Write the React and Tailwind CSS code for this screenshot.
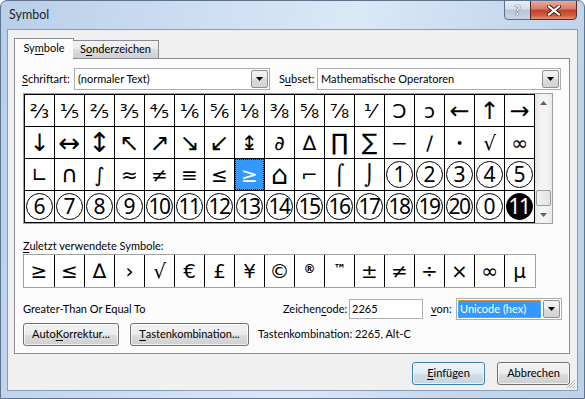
import React from 'react';

// Word "Symbol" dialog, Windows 7 look
const rows = [
  ['⅔', '⅕', '⅖', '⅗', '⅘', '⅙', '⅚', '⅛', '⅜', '⅝', '⅞', '⅟', 'Ↄ', 'ↄ', '←', '↑', '→'],
  ['↓', '↔', '↕', '↖', '↗', '↘', '↙', '↨', '∂', '∆', '∏', '∑', '−', '∕', '∙', '√', '∞'],
  ['∟', '∩', '∫', '≈', '≠', '≡', '≤', '≥', '⌂', '⌐', '⌠', '⌡', { n: '1' }, { n: '2' }, { n: '3' }, { n: '4' }, { n: '5' }],
  [
    { n: '6' }, { n: '7' }, { n: '8' }, { n: '9' }, { n: '10' }, { n: '11' }, { n: '12' }, { n: '13' }, { n: '14' },
    { n: '15' }, { n: '16' }, { n: '17' }, { n: '18' }, { n: '19' }, { n: '20' }, { n: '0' }, { n: '11', dark: true },
  ],
];

const recent = ['≥', '≤', '∆', '›', '√', '€', '£', '¥', '©', '®', '™', '±', '≠', '÷', '×', '∞', 'µ'];

const arrows = '←↑→↓↖↗↘↙';

function glyphSize(g) {
  if (arrows.includes(g)) return 'text-[24px]';
  if (g === '↔') return 'text-[26px]';
  if (g === '↕') return 'text-[27px]';
  if (g === '⌂') return 'text-[27px]';
  if (g === '∙') return 'text-[13px]';
  if (g === '∏' || g === '∑' || g === '∩') return 'text-[23px]';
  return 'text-[20px]';
}

function U({ children }) {
  return <span className="underline underline-offset-[2px]">{children}</span>;
}

function Circled({ n, dark }) {
  return (
    <div
      className={`w-[27px] h-[27px] rounded-full border border-black flex items-center justify-center font-['Noto_Sans',sans-serif] text-[21px] leading-none ${n.length > 1 ? 'tracking-[-1.5px] pr-[1px]' : ''} ${dark ? 'bg-black text-white' : 'bg-white text-black'}`}
    >
      {n}
    </div>
  );
}

function Cell({ g, selected }) {
  const str = typeof g === 'string';
  return (
    <div
      className={`w-[29px] h-[31px] flex items-center justify-center font-['DejaVu_Sans',sans-serif] leading-none ${str ? glyphSize(g) : ''} ${selected ? 'bg-[#3399ff] text-white outline outline-1 outline-dotted outline-[#202020] -outline-offset-1' : 'bg-white text-black'}`}
    >
      {str ? g : <Circled n={g.n} dark={g.dark} />}
    </div>
  );
}

function Arrow() {
  return (
    <svg width="7" height="4" viewBox="0 0 7 4">
      <path d="M0 0h7L3.5 4z" fill="#000" />
    </svg>
  );
}

function Combo({ w, children }) {
  return (
    <div className={`${w} h-[22px] flex border border-[#abadb3] bg-white`}>
      <div className="flex-1 flex items-center pl-[3px] overflow-hidden whitespace-nowrap">{children}</div>
      <div className="w-[17px] m-px flex items-center justify-center border border-[#8f8f8f] rounded-[2px] bg-[linear-gradient(#f4f4f4,#e9e9e9_50%,#dcdcdc_50%,#d2d2d2)]">
        <Arrow />
      </div>
    </div>
  );
}

function Btn({ w, def, children }) {
  return (
    <div
      className={`${w} h-[23px] rounded-[3px] border ${def ? 'border-[#3c7fb1] bg-[linear-gradient(#eef4f9,#e2ebf3_50%,#d1dde8_50%,#c6d5e3)]' : 'border-[#707070] bg-[linear-gradient(#f2f2f2,#ebebeb_50%,#dddddd_50%,#cfcfcf)]'} flex items-center justify-center shadow-[inset_0_0_0_1px_rgba(255,255,255,0.7)]`}
    >
      {children}
    </div>
  );
}

function Scrollbar() {
  return (
    <div className="w-[17px] h-[129px] flex flex-col bg-[linear-gradient(90deg,#e5e5e5,#f3f3f3_30%,#f3f3f3_70%,#e9e9e9)]">
      <div className="h-[17px] flex items-center justify-center">
        <svg width="7" height="4" viewBox="0 0 7 4">
          <path d="M0 4h7L3.5 0z" fill="#606060" />
        </svg>
      </div>
      <div className="flex-1" />
      <div className="h-[16px] mx-px rounded-[2px] border border-[#9a9a9a] bg-[linear-gradient(90deg,#f1f1f1,#e3e3e3)]" />
      <div className="h-[17px] flex items-center justify-center">
        <svg width="7" height="4" viewBox="0 0 7 4">
          <path d="M0 0h7L3.5 4z" fill="#606060" />
        </svg>
      </div>
    </div>
  );
}

export default function App() {
  return (
    <div className="w-[585px] h-[399px] flex flex-col rounded-t-[7px] border border-[#60738c] bg-[linear-gradient(100deg,#b8cfe9,#cfe0f3_35%,#dbe8f6_55%,#c4d8ee_80%,#bcd2ea)] font-['Lato','Segoe_UI',sans-serif] text-[11px] text-black overflow-hidden">
      {/* title bar */}
      <div className="h-[28px] flex items-start">
        <div className="pl-[8px] pt-[6px] text-[12.5px] leading-[16px] text-[#1e1e1e]">Symbol</div>
        <div className="flex-1" />
        <div className="flex mr-[7px] -mt-px">
          <div className="w-[27px] h-[20px] rounded-bl-[4px] border border-[#5f6f84] bg-[linear-gradient(#e6edf5,#d5e0eb_45%,#b6c6d7_50%,#c9d6e4)] flex items-center justify-center">
            <span className="text-white font-bold text-[13px] leading-none [text-shadow:0_0_1px_#2a3440,0_0_1px_#2a3440]">?</span>
          </div>
          <div className="w-[47px] h-[20px] -ml-px rounded-br-[4px] border border-[#5a2a22] bg-[linear-gradient(#e9aa9b,#d77b68_45%,#c2402a_50%,#cf5c42_80%,#e3927a)] flex items-center justify-center">
            <svg width="14" height="11" viewBox="0 0 14 11">
              <path d="M2 1.5l10 8M12 1.5l-10 8" stroke="#3b1a14" strokeWidth="4" strokeLinecap="square" />
              <path d="M2 1.5l10 8M12 1.5l-10 8" stroke="#fff" strokeWidth="2.2" strokeLinecap="square" />
            </svg>
          </div>
        </div>
      </div>

      {/* client area */}
      <div className="mx-[6px] h-[362px] border border-[#8a9cb3] bg-[#f0f0f0] flex flex-col relative">
        {/* tabs */}
        <div className="mt-[8px] ml-[6px] h-[21px] flex items-end -mb-px relative z-10">
          <div className="w-[60px] h-[21px] border border-b-0 border-[#898c95] bg-[#fcfcfc] flex items-center justify-center pb-[1px]">
            Sy<U>m</U>bole
          </div>
          <div className="w-[86px] h-[18px] mb-px -ml-px border border-b-0 border-l-0 border-[#898c95] bg-[linear-gradient(#f2f2f2,#ebebeb_50%,#dddddd_50%,#cfcfcf)] flex items-center justify-center">
            S<U>o</U>nderzeichen
          </div>
        </div>

        {/* panel */}
        <div className="ml-[6px] w-[556px] border border-[#898c95] bg-[#fcfcfc] flex flex-col pb-[7px]">
          <div className="mt-[9px] flex items-center">
            <div className="ml-[7px] w-[52px]">
              <U>S</U>chriftart:
            </div>
            <Combo w="w-[196px]">(normaler Text)</Combo>
            <div className="ml-[9px] w-[38px]">
              S<U>u</U>bset:
            </div>
            <Combo w="w-[244px]">Mathematische Operatoren</Combo>
          </div>

          {/* symbol grid */}
          <div className="mt-[3px] ml-[8px] w-[530px] flex border border-[#a0a0a0]">
            <div className="grid grid-cols-[repeat(17,29px)] gap-px p-px bg-black">
              {rows.map((r, ri) =>
                r.map((g, ci) => <Cell key={ri + '-' + ci} g={g} selected={ri === 2 && ci === 7} />)
              )}
            </div>
            <Scrollbar />
          </div>

          <div className="mt-[14px] ml-[8px] h-[16px] leading-[16px]">
            <U>Z</U>uletzt verwendete Symbole:
          </div>
          <div className="ml-[8px] w-[513px] h-[34px] flex border border-[#a0a0a0] bg-white">
            {recent.map((g, i) => (
              <div
                key={i}
                className={`w-[30px] h-full flex justify-center font-['DejaVu_Sans',sans-serif] ${i > 0 ? 'border-l border-black' : ''} ${g === '®' || g === '™' ? 'items-start pt-[5px] text-[12px] font-bold' : 'items-center text-[20px]'}`}
              >
                {g}
              </div>
            ))}
          </div>

          <div className="mt-[10px] ml-[8px] h-[22px] flex items-center">
            <div className="w-[260px]">Greater-Than Or Equal To</div>
            <div className="w-[66px]">
              Zeichen<U>c</U>ode:
            </div>
            <div className="w-[74px] h-[20px] border border-[#abadb3] bg-white flex items-center pl-[2px]">2265</div>
            <div className="ml-[8px] w-[25px]">
              <U>v</U>on:
            </div>
            <div className="w-[106px] h-[22px] flex border border-[#abadb3] bg-white">
              <div className="flex-1 m-px flex items-center pl-[2px] bg-[#3399ff] text-white outline outline-1 outline-dotted outline-[#e0a040] -outline-offset-1">
                Unicode (hex)
              </div>
              <div className="w-[17px] m-px flex items-center justify-center border border-[#8f8f8f] rounded-[2px] bg-[linear-gradient(#f4f4f4,#e9e9e9_50%,#dcdcdc_50%,#d2d2d2)]">
                <Arrow />
              </div>
            </div>
          </div>

          <div className="mt-[3px] ml-[8px] flex items-center">
            <Btn w="w-[96px]">
              Auto<U>K</U>orrektur...
            </Btn>
            <div className="ml-[11px]">
              <Btn w="w-[119px]">
                <U>T</U>astenkombination...
              </Btn>
            </div>
            <div className="ml-[9px]">Tastenkombination: 2265, Alt-C</div>
          </div>
        </div>

        {/* dialog buttons */}
        <div className="mt-[8px] flex justify-end pr-[7px] gap-[12px]">
          <Btn w="w-[73px]" def>
            <U>E</U>infügen
          </Btn>
          <Btn w="w-[73px]">Abbrechen</Btn>
        </div>

        {/* size grip */}
        <svg className="absolute right-[1px] bottom-[1px]" width="11" height="11" viewBox="0 0 11 11">
          <path d="M10 2L2 10M10 5L5 10M10 8L8 10" stroke="#a8b0bc" strokeWidth="1" />
        </svg>
      </div>
    </div>
  );
}
